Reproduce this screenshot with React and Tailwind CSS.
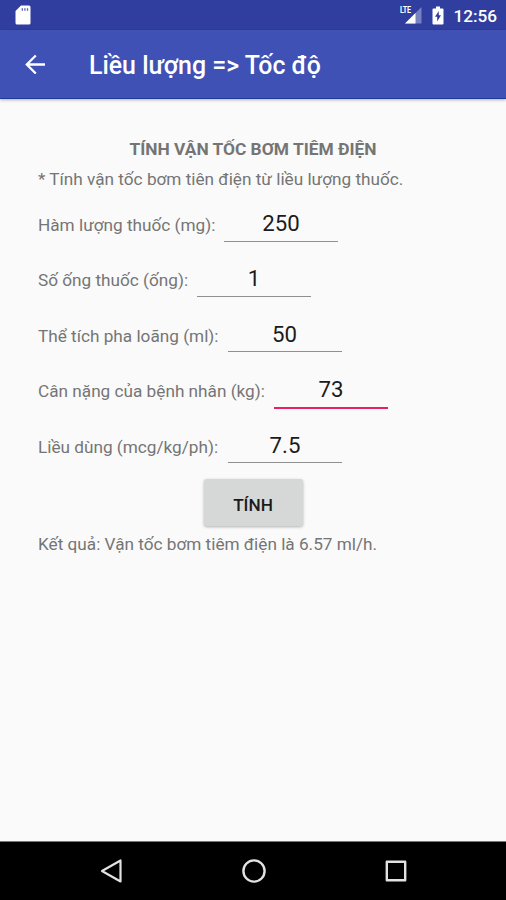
import { useState } from 'react';

const initialFields = [
  { id: 'content', label: 'Hàm lượng thuốc (mg):', value: '250', labelWidth: 'w-[186px]' },
  { id: 'ampoules', label: 'Số ống thuốc (ống):', value: '1', labelWidth: 'w-[159px]' },
  { id: 'volume', label: 'Thể tích pha loãng (ml):', value: '50', labelWidth: 'w-[189.5px]' },
  { id: 'weight', label: 'Cân nặng của bệnh nhân (kg):', value: '73', labelWidth: 'w-[236px]' },
  { id: 'dose', label: 'Liều dùng (mcg/kg/ph):', value: '7.5', labelWidth: 'w-[190px]' },
];

const StatusBar = () => (
  <div className="flex h-[30px] shrink-0 items-center bg-[#303f9f] text-white">
    <svg className="ml-[15px] h-5 w-4" viewBox="0 0 16 20">
      <path fill="#fff" d="M6 0.5h8a1.5 1.5 0 0 1 1.5 1.5v16a1.5 1.5 0 0 1-1.5 1.5H2A1.5 1.5 0 0 1 .5 18V6z" />
      <path stroke="#303f9f" strokeOpacity="0.8" strokeWidth="1.3" d="M7.3 3.2v2.6M9.9 3.2v2.6M12.5 3.2v2.6" />
    </svg>
    <div className="ml-auto flex items-center pr-[9px]">
      <div className="relative h-[18px] w-[22px]">
        <svg className="h-full w-full" viewBox="0 0 22 18">
          <path fill="#fff" fillOpacity="0.35" d="M21.5 1v16.5H5z" />
          <path fill="#fff" d="M15.5 7v10.5H5z" />
        </svg>
        <span className="absolute top-0 left-0 origin-left scale-x-[.8] text-[9px] leading-[9px] font-bold tracking-[-0.4px]">LTE</span>
      </div>
      <svg className="ml-[10px] h-[19px] w-3" viewBox="0 0 12 19">
        <path fill="#fff" d="M4 0.5h4v2h2.5a1 1 0 0 1 1 1v14a1 1 0 0 1-1 1h-9a1 1 0 0 1-1-1v-14a1 1 0 0 1 1-1H4z" />
        <path fill="#303f9f" d="M6.8 5v4.3H9L5.2 15.5v-4.7H3z" />
      </svg>
      <span className="ml-[9px] pt-[2px] text-[17.2px] leading-[28px] font-medium">12:56</span>
    </div>
  </div>
);

const AppBar = () => (
  <header className="relative flex h-[69px] shrink-0 items-center border-b border-[#1f3a9c] bg-[#3f51b5] text-white shadow-[0_1px_3px_rgba(0,0,0,0.3)]">
    <button className="ml-[25px] h-5 w-5" aria-label="Back">
      <svg className="h-5 w-5" viewBox="0 0 20 20" fill="none" stroke="currentColor" strokeWidth="2.3">
        <path d="M20 10.5H2M10.8 1.5L1.8 10.5l9 9" />
      </svg>
    </button>
    <h1 className="ml-11 pt-1 text-[24.9px] leading-8 font-medium whitespace-nowrap">Liều lượng =&gt; Tốc độ</h1>
  </header>
);

const Field = ({ field, focused, onFocus, onChange }) => (
  <div className="flex h-[55.4px] items-baseline">
    <label htmlFor={field.id} className={`${field.labelWidth} shrink-0 whitespace-nowrap`}>
      {field.label}
    </label>
    <input
      id={field.id}
      value={field.value}
      onFocus={onFocus}
      onChange={(e) => onChange(e.target.value)}
      className={`w-[114px] text-center text-[22.2px] text-[#1b1b1b] outline-none ${
        focused ? 'h-[37px] border-b-2 border-[#e91e63]' : 'h-9 border-b border-[#8f8f8f]'
      }`}
    />
  </div>
);

const NavBar = () => (
  <nav className="flex h-[59px] shrink-0 items-center justify-between border-t border-[#777] bg-black pr-[98px] pl-[100px]">
    <svg className="h-6 w-6" viewBox="0 0 24 24" fill="none" stroke="#e2e2e2" strokeWidth="2.2" strokeLinejoin="round">
      <path d="M20.5 1.5v21L2 12z" />
    </svg>
    <svg className="h-6 w-6" viewBox="0 0 24 24" fill="none" stroke="#e2e2e2" strokeWidth="2.4">
      <circle cx="12" cy="12" r="10.6" />
    </svg>
    <svg className="h-6 w-6" viewBox="0 0 24 24" fill="none" stroke="#e2e2e2" strokeWidth="2.4" strokeLinejoin="round">
      <path d="M2.8 2.8h18.4v18.4H2.8z" />
    </svg>
  </nav>
);

export default function App() {
  const [fields, setFields] = useState(initialFields);
  const [focusedId, setFocusedId] = useState('weight');

  const updateField = (id, value) => {
    setFields(fields.map((f) => (f.id === id ? { ...f, value } : f)));
  };

  return (
    <div className="flex h-[900px] w-[506px] flex-col overflow-hidden bg-[#fafafa] font-['Roboto',sans-serif]">
      <StatusBar />
      <AppBar />
      <main className="flex flex-1 flex-col px-[38px] pt-[40px] text-[17.2px] leading-5 text-[#757575]">
        <h2 className="text-center text-[17.35px] font-bold whitespace-nowrap">TÍNH VẬN TỐC BƠM TIÊM ĐIỆN</h2>
        <p className="mt-[10px] mb-[16.5px] whitespace-nowrap">* Tính vận tốc bơm tiên điện từ liều lượng thuốc.</p>
        {fields.map((field) => (
          <Field
            key={field.id}
            field={field}
            focused={field.id === focusedId}
            onFocus={() => setFocusedId(field.id)}
            onChange={(value) => updateField(field.id, value)}
          />
        ))}
        <button className="-mt-[3px] h-[47px] w-[99px] shrink-0 self-center rounded-[3px] bg-[#d6d7d7] pt-[5px] text-[17.2px] font-medium text-[#1b1b1b] shadow-[0_1px_3px_rgba(0,0,0,0.3)]">
          TÍNH
        </button>
        <p className="mt-[8px] whitespace-nowrap">Kết quả: Vận tốc bơm tiêm điện là 6.57 ml/h.</p>
      </main>
      <NavBar />
    </div>
  );
}
